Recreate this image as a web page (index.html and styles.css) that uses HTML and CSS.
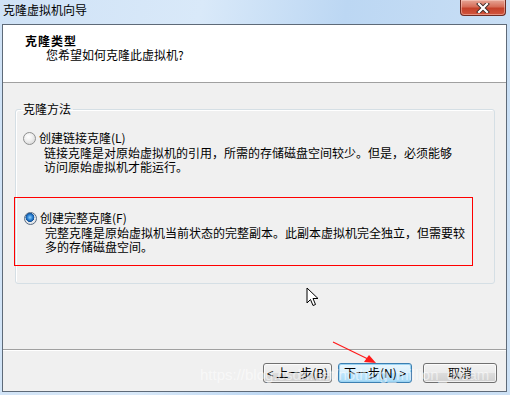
FILE: index.html
```html
<!DOCTYPE html>
<html lang="zh-CN">
<head>
    <meta charset="UTF-8">
    <title>克隆虚拟机向导</title>
    <link rel="stylesheet" href="styles.css">
</head>
<body>
    <div class="window">
        <div class="titlebar">
            <span class="title">克隆虚拟机向导</span>
            <button class="close-btn" aria-label="关闭">
                <svg width="14" height="10" viewBox="0 0 14 10">
                    <path d="M3 1 L11 9 M11 1 L3 9" stroke="#3b2a28" stroke-width="4" stroke-linecap="square"/>
                    <path d="M3 1 L11 9 M11 1 L3 9" stroke="#ffffff" stroke-width="2.2" stroke-linecap="square"/>
                </svg>
            </button>
        </div>

        <div class="client">
            <div class="wizard-header">
                <div class="header-title">克隆类型</div>
                <div class="header-sub">您希望如何克隆此虚拟机?</div>
            </div>

            <div class="wizard-body">
                <fieldset class="groupbox">
                    <legend>克隆方法</legend>

                    <div class="option">
                        <div class="option-label">
                            <span class="radio"></span>
                            <span>创建链接克隆(L)</span>
                        </div>
                        <div class="option-desc">链接克隆是对原始虚拟机的引用，所需的存储磁盘空间较少。但是，必须能够<br>访问原始虚拟机才能运行。</div>
                    </div>

                    <div class="option option-marked">
                        <div class="option-label">
                            <span class="radio checked"></span>
                            <span>创建完整克隆(F)</span>
                        </div>
                        <div class="option-desc">完整克隆是原始虚拟机当前状态的完整副本。此副本虚拟机完全独立，但需要较<br>多的存储磁盘空间。</div>
                    </div>
                </fieldset>
            </div>

            <div class="wizard-footer">
                <button class="btn btn-back">&lt; 上一步(B)</button>
                <button class="btn btn-next">下一步(N) &gt;</button>
                <button class="btn btn-cancel">取消</button>
            </div>
        </div>

        <!-- annotation + cursor sit on top of the dialog -->
        <svg class="pointer" width="14" height="20" viewBox="0 0 14 20">
            <path d="M1 1 L1 16 L4.5 12.5 L7 18.5 L9.5 17.5 L7 11.5 L12 11.5 Z" fill="#ffffff" stroke="#000000" stroke-width="1"/>
        </svg>
        <svg class="red-arrow" width="50" height="26" viewBox="0 0 50 26">
            <path d="M1 1 L38 19" stroke="#ff1a1a" stroke-width="1.2"/>
            <path d="M44 22 L32 21 L37 14 Z" fill="#ff1a1a"/>
        </svg>
        <div class="watermark">https://blog.csdn.net/nothing_million_dream</div>
    </div>
</body>
</html>
```

FILE: styles.css
```css
* {
    margin: 0;
    padding: 0;
    box-sizing: border-box;
}

body {
    width: 510px;
    height: 395px;
    overflow: hidden;
    font-family: "Noto Sans CJK SC", "Liberation Sans", sans-serif;
    font-size: 12px;
    color: #000;
    background: #c3d9f1;
}

.window {
    position: relative;
    display: flex;
    flex-direction: column;
    height: 395px;
    padding: 0 3px 3px 2px;
    background: linear-gradient(100deg, #cfe2f6 0%, #d9e9f9 35%, #bcd7f3 60%, #cde1f5 100%);
}

/* title bar */
.titlebar {
    display: flex;
    align-items: flex-start;
    height: 24px;
}

.title {
    padding: 3px 0 0 1px;
    line-height: 14px;
    color: #000;
}

.close-btn {
    display: flex;
    align-items: center;
    justify-content: center;
    width: 46px;
    height: 16px;
    margin-left: auto;
    margin-right: 1px;
    border: 1px solid #6e2b22;
    border-top: none;
    border-radius: 0 0 4px 4px;
    background: linear-gradient(#e6a596 0%, #d66d58 45%, #c4412a 55%, #d2553d 100%);
    box-shadow: inset 0 0 0 1px rgba(255, 220, 210, 0.45);
}

/* dialog client area */
.client {
    flex: 1;
    display: flex;
    flex-direction: column;
    border: 1px solid #5e6a78;
    background: #f0f0f0;
}

.wizard-header {
    height: 58px;
    padding: 9px 0 0 22px;
    background: #fff;
    border-bottom: 1px solid #a0a0a0;
}

.header-title {
    font-weight: bold;
    line-height: 14px;
    letter-spacing: 1px;
}

.header-sub {
    padding-left: 21px;
    line-height: 14px;
}

.wizard-body {
    flex: 1;
    padding: 0 11px 0 12px;
}

.groupbox {
    margin-top: 18px;
    padding: 0 0 17px 0;
    border: 1px solid #d5dfe5;
    border-radius: 3px;
    box-shadow: inset 1px 1px 0 #fff;
}

.groupbox legend {
    margin-left: 5px;
    padding: 0 2px;
    line-height: 16px;
}

.option {
    padding-top: 13px;
}

.option-label {
    display: flex;
    align-items: center;
    gap: 3px;
    height: 16px;
    padding-left: 7px;
    line-height: 16px;
}

.option-desc {
    padding-left: 28px;
    line-height: 14px;
    white-space: nowrap;
}

.option-marked {
    margin: 23px 21px 0 -2px;
    padding: 12px 0 11px 2px;
    border: 1px solid #ff0000;
}

/* win7 radio */
.radio {
    width: 13px;
    height: 13px;
    border-radius: 50%;
    border: 1px solid #8e8f8f;
    background: radial-gradient(circle at 40% 35%, #ffffff 0%, #f0f0f0 40%, #cfcfcf 100%);
    flex-shrink: 0;
}

.radio.checked {
    border-color: #5a6d84;
    background:
        radial-gradient(circle at 45% 40%, #8fd2ff 0%, #2a7ed0 30%, #0f4f96 48%, transparent 52%),
        radial-gradient(circle, #f4f4f4 0%, #d8dde2 100%);
}

/* footer buttons */
.wizard-footer {
    display: flex;
    justify-content: flex-end;
    height: 42px;
    padding: 13px 9px 0 0;
    border-top: 1px solid #a0a0a0;
    box-shadow: inset 0 1px 0 #fff;
}

.btn {
    height: 20px;
    padding: 0;
    font-family: inherit;
    font-size: 12px;
    line-height: 18px;
    white-space: nowrap;
    color: #000;
    border: 1px solid #707070;
    border-radius: 3px;
    background: linear-gradient(#f2f2f2 0%, #ebebeb 50%, #dddddd 51%, #cfcfcf 100%);
    box-shadow: inset 0 0 0 1px rgba(255, 255, 255, 0.7);
}

.btn-back {
    width: 69px;
}

.btn-next {
    width: 74px;
    margin-left: 6px;
    border-color: #3c7fb1;
    background: linear-gradient(#eaf6fd 0%, #d9f0fc 50%, #bee6fd 51%, #a7d9f5 100%);
    box-shadow: inset 0 0 0 1px #9ad3f3;
}

.btn-cancel {
    width: 74px;
    margin-left: 11px;
}

/* overlays */
.pointer {
    position: absolute;
    left: 306px;
    top: 287px;
}

.red-arrow {
    position: absolute;
    left: 332px;
    top: 341px;
}

.watermark {
    position: absolute;
    left: 200px;
    top: 366px;
    font-family: "Liberation Sans", sans-serif;
    font-size: 15px;
    color: rgba(255, 255, 255, 0.55);
    white-space: nowrap;
    pointer-events: none;
}
```
